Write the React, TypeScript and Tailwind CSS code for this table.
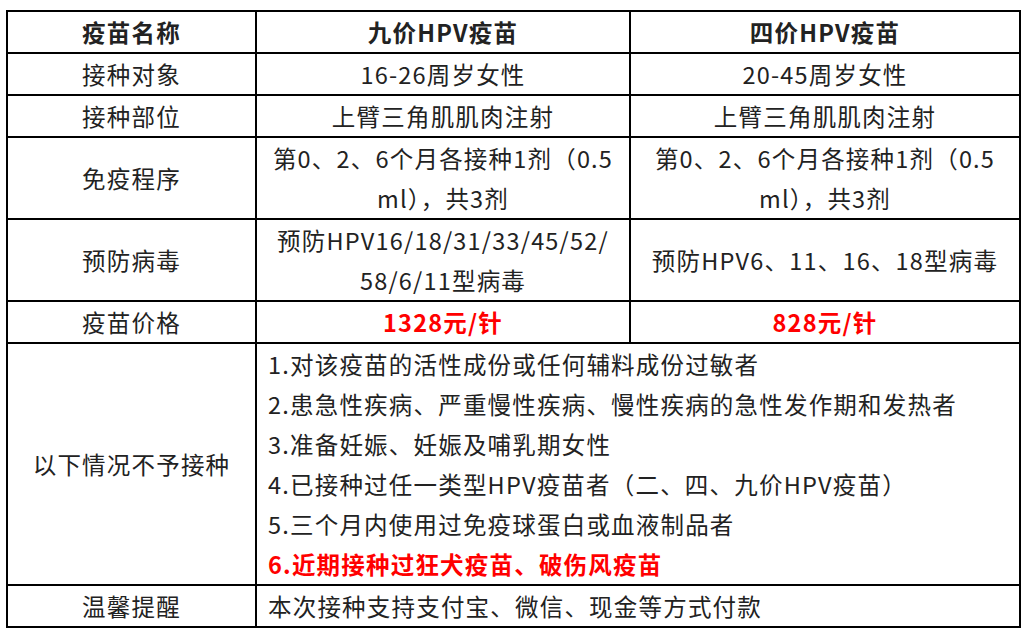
const rows: { label: string; a: React.ReactNode; b: React.ReactNode }[] = [
  { label: "接种对象", a: "16-26周岁女性", b: "20-45周岁女性" },
  { label: "接种部位", a: "上臂三角肌肌肉注射", b: "上臂三角肌肌肉注射" },
  {
    label: "免疫程序",
    a: (
      <>
        第0、2、6个月各接种1剂（0.5
        <br />
        ml），共3剂
      </>
    ),
    b: (
      <>
        第0、2、6个月各接种1剂（0.5
        <br />
        ml），共3剂
      </>
    ),
  },
  {
    label: "预防病毒",
    a: (
      <>
        预防HPV16/18/31/33/45/52/
        <br />
        58/6/11型病毒
      </>
    ),
    b: "预防HPV6、11、16、18型病毒",
  },
];

const contra = [
  "1.对该疫苗的活性成份或任何辅料成份过敏者",
  "2.患急性疾病、严重慢性疾病、慢性疾病的急性发作期和发热者",
  "3.准备妊娠、妊娠及哺乳期女性",
  "4.已接种过任一类型HPV疫苗者（二、四、九价HPV疫苗）",
  "5.三个月内使用过免疫球蛋白或血液制品者",
];

const cell = "border-2 border-black text-center align-middle p-0";

export default function App() {
  return (
    <div className="w-[1031px] h-[633px] bg-white pt-[10px] pl-[6px]">
      <table
        className="border-collapse w-[1013px] table-fixed text-[#222] text-[23.5px] leading-[40px] tracking-[1.2px]"
        style={{ fontFamily: '"Noto Sans CJK SC", "Noto Sans", sans-serif' }}
      >
        <colgroup>
          <col className="w-[249px]" />
          <col className="w-[374px]" />
          <col className="w-[390px]" />
        </colgroup>
        <tbody>
          <tr className="font-bold">
            <td className={cell}>疫苗名称</td>
            <td className={cell}>九价HPV疫苗</td>
            <td className={cell}>四价HPV疫苗</td>
          </tr>
          {rows.map((r) => (
            <tr key={r.label}>
              <td className={cell}>{r.label}</td>
              <td className={cell}>{r.a}</td>
              <td className={cell}>{r.b}</td>
            </tr>
          ))}
          <tr>
            <td className={cell}>疫苗价格</td>
            <td className={`${cell} font-bold text-[#ff0000]`}>1328元/针</td>
            <td className={`${cell} font-bold text-[#ff0000]`}>828元/针</td>
          </tr>
          <tr>
            <td className={cell}>以下情况不予接种</td>
            <td colSpan={2} className={`${cell} text-left pl-[11px]`}>
              {contra.map((c) => (
                <div key={c}>{c}</div>
              ))}
              <div className="font-bold text-[#ff0000]">6.近期接种过狂犬疫苗、破伤风疫苗</div>
            </td>
          </tr>
          <tr>
            <td className={cell}>温馨提醒</td>
            <td colSpan={2} className={`${cell} text-left pl-[11px]`}>
              本次接种支持支付宝、微信、现金等方式付款
            </td>
          </tr>
        </tbody>
      </table>
    </div>
  );
}
